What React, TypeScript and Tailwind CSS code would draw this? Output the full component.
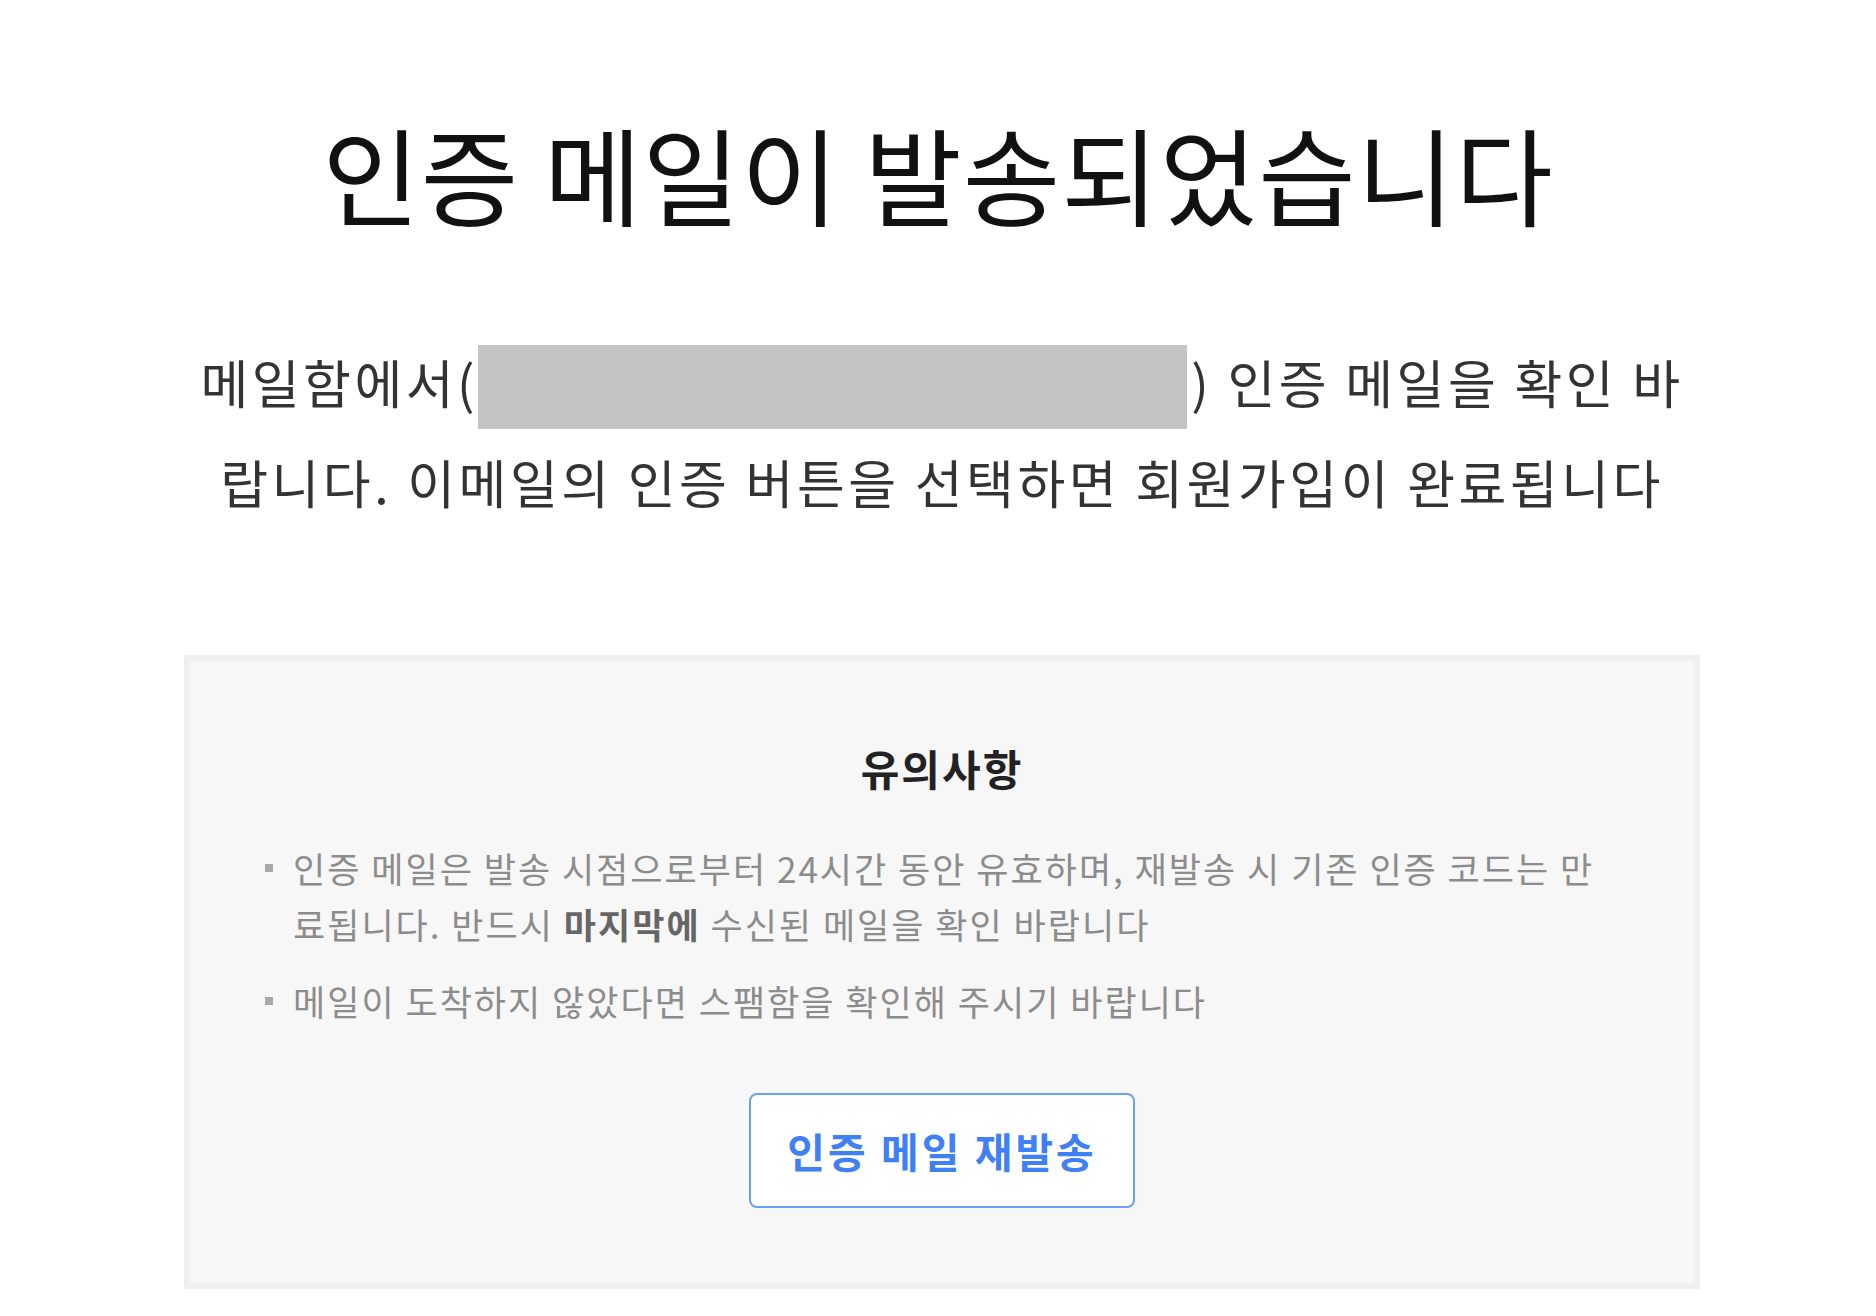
import React, { FC } from "react";

const notices = [
  {
    key: "expire",
    content: (
      <>
        인증 메일은 발송 시점으로부터 24시간 동안 유효하며, 재발송 시 기존 인증 코드는 만
        <br />
        료됩니다. 반드시 <strong className="font-semibold text-[#666]">마지막에</strong> 수신된 메일을 확인 바랍니다
      </>
    ),
  },
  {
    key: "spam",
    content: <>메일이 도착하지 않았다면 스팸함을 확인해 주시기 바랍니다</>,
  },
];

const App: FC = () => {
  return (
    <main className="min-h-screen bg-white flex flex-col items-center font-['Noto_Sans_CJK_KR','Noto_Sans',sans-serif]">
      <h1 className="pt-[112px] text-[106px] leading-[120px] tracking-[1px] font-normal text-[#111] whitespace-nowrap">
        인증 메일이 발송되었습니다
      </h1>

      <p className="mt-[100px] ml-[8px] text-[52px] leading-[100px] tracking-[3.5px] text-[#333] text-center whitespace-nowrap">
        메일함에서(
        <span className="inline-block align-middle -mt-[6px] mr-[4px] w-[709px] h-[84px] bg-[#c4c4c4]" />) 인증 메일을 확인 바
        <br />
        랍니다. 이메일의 인증 버튼을 선택하면 회원가입이 완료됩니다
      </p>

      <section className="mt-[123px] ml-[8px] w-[1516px] border-[6px] border-[#f0f0f2] bg-[#f7f7f7] pt-[82px] pb-[75px] flex flex-col items-center">
        <h2 className="text-[42px] leading-[50px] tracking-[2px] font-bold text-[#222]">유의사항</h2>

        <ul className="mt-[47px] self-stretch pl-[75px] flex flex-col gap-[21px]">
          {notices.map((notice) => (
            <li
              key={notice.key}
              className="flex text-[35px] leading-[56px] tracking-[2px] text-[#8c8c8c] whitespace-nowrap"
            >
              <span className="mt-[24px] mr-[20px] w-[8px] h-[8px] shrink-0 bg-[#a8a8a8]" />
              <span>{notice.content}</span>
            </li>
          ))}
        </ul>

        <button
          type="button"
          className="mt-[64px] w-[386px] h-[115px] border-2 border-[#6a9ff5] rounded-[8px] bg-white text-[41px] tracking-[3px] font-semibold text-[#3f80f5]"
        >
          인증 메일 재발송
        </button>
      </section>
    </main>
  );
};

export default App;
